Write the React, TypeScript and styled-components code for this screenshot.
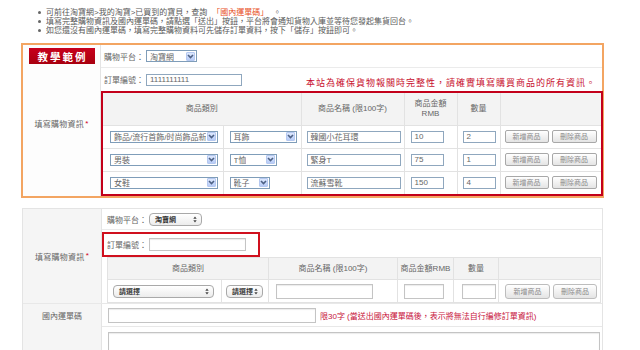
import styled, { createGlobalStyle } from "styled-components";

// ─── Global ────────────────────────────
const GlobalStyle = createGlobalStyle`
  html, body { margin: 0; padding: 0; background: #ffffff; }
  body {
    font-family: "Liberation Sans", "Noto Sans CJK TC", sans-serif;
    color: #555555;
  }
  * { box-sizing: border-box; }
`;

// ─── Layout ────────────────────────────
const Page = styled.div`
  width: 640px;
  height: 350px;
  overflow: hidden;
  padding: 8px 36px 0 21px;
`;

const Notes = styled.ul`
  list-style: none;
  margin: 0 0 8px;
  padding: 0 0 0 17px;
`;

const NoteItem = styled.li`
  display: flex;
  align-items: center;
  gap: 5px;
  height: 9px;
  font-size: 8px;
  line-height: 9px;
  color: #5a5a5a;
  white-space: nowrap;
`;

const Dot = styled.span`
  width: 3px;
  height: 3px;
  border-radius: 50%;
  background: #666666;
  flex-shrink: 0;
`;

const Hot = styled.span`
  color: #e8501e;
`;

const FormBlock = styled.div<{ $sample?: boolean }>`
  width: ${(p) => (p.$sample ? 583 : 581)}px;
  margin-left: ${(p) => (p.$sample ? 0 : 1)}px;
  margin-bottom: ${(p) => (p.$sample ? 10 : 0)}px;
  border: ${(p) => (p.$sample ? "2px solid #f3a562" : "1px solid #e4e4e4")};
  background: #ffffff;
`;

const FormRow = styled.div<{ $left: number; $h?: number; $last?: boolean }>`
  display: grid;
  grid-template-columns: ${(p) => p.$left}px 1fr;
  ${(p) => (p.$h ? `height: ${p.$h}px;` : "")}
  border-bottom: ${(p) => (p.$last ? "none" : "1px solid #e8e8e8")};
`;

const LabelCell = styled.div<{ $tone?: "plain" | "gray" }>`
  display: flex;
  flex-direction: column;
  align-items: center;
  justify-content: center;
  background: ${(p) => (p.$tone === "gray" ? "#f5f5f5" : "#fdfdfd")};
  border-right: 1px solid #e4e4e4;
  font-size: 8px;
  color: #666666;
  white-space: nowrap;
`;

const SampleLabelCell = styled(LabelCell)`
  justify-content: flex-start;
  padding: 3px 2px;
`;

const Badge = styled.div`
  width: 66px;
  height: 16px;
  display: flex;
  align-items: center;
  justify-content: center;
  background: linear-gradient(180deg, #c8001c 0%, #a8000f 100%);
  color: #ffffff;
  font-family: "Noto Sans CJK TC", sans-serif;
  font-weight: 700;
  font-size: 10.5px;
  letter-spacing: 2px;
  padding-left: 2px;
`;

const LabelText = styled.div<{ $shift?: number }>`
  flex: 1;
  display: flex;
  align-items: center;
  padding-bottom: ${(p) => p.$shift ?? 0}px;
  letter-spacing: 0.3px;
`;

const Star = styled.sup`
  color: #d0021b;
  font-size: 8px;
  line-height: 0;
  margin-left: 1px;
`;

const FieldCell = styled.div`
  display: flex;
  flex-direction: column;
  min-width: 0;
`;

const FieldRow = styled.div<{ $h: number; $pad: number; $line?: boolean }>`
  height: ${(p) => p.$h}px;
  display: flex;
  align-items: center;
  gap: 2px;
  padding-left: ${(p) => p.$pad}px;
  border-bottom: ${(p) => (p.$line ? "1px solid #ebebeb" : "none")};
  font-size: 8px;
  color: #666666;
  white-space: nowrap;
`;

const Notice = styled.span`
  margin-left: auto;
  margin-right: 6px;
  align-self: flex-end;
  padding-bottom: 2px;
  color: #c8102e;
  font-size: 9px;
  letter-spacing: 1px;
`;

const Highlight = styled.div`
  display: flex;
  align-items: center;
  gap: 2px;
  width: 158px;
  height: 25px;
  margin-top: 1px;
  padding-left: 3px;
  border: 2px solid #d0101e;
`;

// ─── Form controls ─────────────────────
const XpSelect = styled.div<{ $w: number }>`
  width: ${(p) => p.$w}px;
  height: 12px;
  display: flex;
  align-items: center;
  justify-content: space-between;
  padding: 0 1px 0 3px;
  border: 1px solid #7f9db9;
  background: #ffffff;
  font-size: 8px;
  color: #666666;
  overflow: hidden;
`;

const XpSelectText = styled.span`
  overflow: hidden;
  white-space: nowrap;
`;

const XpArrow = styled.span`
  width: 9px;
  height: 9px;
  flex-shrink: 0;
  display: flex;
  align-items: center;
  justify-content: center;
  background: linear-gradient(180deg, #dde8fd 0%, #b7cbf6 100%);
  border: 1px solid #b5c8f0;
  border-radius: 1px;
`;

const MacSelect = styled.div<{ $w: number }>`
  width: ${(p) => p.$w}px;
  height: 13px;
  display: flex;
  align-items: center;
  justify-content: space-between;
  padding: 0 4px 0 5px;
  border: 1px solid #a9a9a9;
  border-radius: 4px;
  background: linear-gradient(180deg, #ffffff 0%, #ececec 100%);
  font-size: 7px;
  font-weight: 700;
  color: #333333;
`;

const TextBox = styled.div<{ $w: number; $h?: number; $mac?: boolean }>`
  width: ${(p) => p.$w}px;
  height: ${(p) => p.$h ?? 12}px;
  display: flex;
  align-items: center;
  padding-left: 3px;
  border: 1px solid ${(p) => (p.$mac ? "#c4c4c4" : "#8fa7be")};
  box-shadow: ${(p) => (p.$mac ? "inset 0 1px 1px rgba(0,0,0,0.08)" : "none")};
  background: #ffffff;
  font-size: 8px;
  color: #666666;
  white-space: nowrap;
`;

const Btn = styled.button<{ $w: number; $mac?: boolean }>`
  width: ${(p) => p.$w}px;
  height: ${(p) => (p.$mac ? 15 : 13)}px;
  padding: 0;
  border: 1px solid ${(p) => (p.$mac ? "#bdbdbd" : "#a8a8a8")};
  border-radius: ${(p) => (p.$mac ? 3 : 2)}px;
  background: linear-gradient(180deg, #ffffff 0%, #e4e4e4 100%);
  font-family: "Noto Sans CJK TC", sans-serif;
  font-size: 7px;
  color: #8a8a8a;
  line-height: 1;
`;

const BtnGroup = styled.div`
  display: flex;
  gap: 3px;
`;

const TextArea = styled.div`
  width: 492px;
  height: 40px;
  margin: 5px 0 0 6px;
  border: 1px solid #c4c4c4;
  box-shadow: inset 0 1px 1px rgba(0,0,0,0.08);
  background: #ffffff;
`;

const Hint = styled.span`
  color: #c8143c;
  font-size: 8px;
  margin-left: 2px;
`;

// ─── Tables ────────────────────────────
const ItemTable = styled.table<{ $sample?: boolean }>`
  border-collapse: collapse;
  table-layout: fixed;
  width: ${(p) => (p.$sample ? 500 : 493)}px;
  margin-left: ${(p) => (p.$sample ? 0 : 5)}px;
  border: ${(p) => (p.$sample ? "2px solid #c3001a" : "1px solid #e2e2e2")};

  th, td {
    border: 1px solid #e2e2e2;
    padding: 0;
    font-size: 8px;
    color: #666666;
    font-weight: 400;
  }
  th {
    background: #f3f3f3;
    text-align: center;
    line-height: 10px;
  }
`;

const HeadRow = styled.tr<{ $h: number }>`
  height: ${(p) => p.$h}px;
`;

const BodyRow = styled.tr<{ $h: number }>`
  height: ${(p) => p.$h}px;
`;

const Cell = styled.td<{ $pad: number }>`
  && { padding-left: ${(p) => p.$pad}px; }
  vertical-align: middle;
`;

// ─── Icons ─────────────────────────────
const ChevronDown = () => (
  <svg width="7" height="5" viewBox="0 0 7 5">
    <path d="M1 1 L3.5 3.5 L6 1" stroke="#4d6185" strokeWidth="1.6" fill="none" />
  </svg>
);

const UpDown = () => (
  <svg width="4" height="7" viewBox="0 0 4 7">
    <path d="M0.3 2.8 L2 0.6 L3.7 2.8 Z M0.3 4.2 L2 6.4 L3.7 4.2 Z" fill="#444444" />
  </svg>
);

// ─── Data ──────────────────────────────
type Item = {
  cat: string;
  sub: string;
  subW: number;
  name: string;
  price: string;
  qty: string;
};

const sampleItems: Item[] = [
  { cat: "飾品/流行首飾/时尚飾品新", sub: "耳飾", subW: 67, name: "韓國小花耳環", price: "10", qty: "2" },
  { cat: "男裝", sub: "T恤", subW: 47, name: "緊身T", price: "75", qty: "1" },
  { cat: "女鞋", sub: "靴子", subW: 40, name: "流蘇雪靴", price: "150", qty: "4" },
];

const XpPick = ({ w, value }: { w: number; value: string }) => (
  <XpSelect $w={w}>
    <XpSelectText>{value}</XpSelectText>
    <XpArrow><ChevronDown /></XpArrow>
  </XpSelect>
);

const MacPick = ({ w, value }: { w: number; value: string }) => (
  <MacSelect $w={w}>
    <span>{value}</span>
    <UpDown />
  </MacSelect>
);

// ─── Component ─────────────────────────
export default function App() {
  return (
    <>
      <GlobalStyle />
      <Page>
        <Notes>
          <NoteItem><Dot />可前往淘寶網&gt;我的淘寶&gt;已買到的寶貝，查詢<Hot>「國內運單碼」</Hot>。</NoteItem>
          <NoteItem><Dot />填寫完整購物資訊及國內運單碼，請點選「送出」按鈕，平台將會通知貨物入庫並等待您發起集貨回台。</NoteItem>
          <NoteItem><Dot />如您還沒有國內運單碼，填寫完整購物資料可先儲存訂單資料，按下「儲存」按鈕即可。</NoteItem>
        </Notes>

        {/* ── Sample (教學範例) ── */}
        <FormBlock $sample>
          <FormRow $left={78} $last>
            <SampleLabelCell>
              <Badge>教學範例</Badge>
              <LabelText $shift={10}>填寫購物資訊<Star>*</Star></LabelText>
            </SampleLabelCell>
            <FieldCell>
              <FieldRow $h={23} $pad={3} $line>
                購物平台：<XpPick w={51} value="淘寶網" />
              </FieldRow>
              <FieldRow $h={23} $pad={3}>
                訂單編號：<TextBox $w={96}>1111111111</TextBox>
                <Notice>本站為確保貨物報關時完整性，請確實填寫購買商品的所有資訊。</Notice>
              </FieldRow>
              <ItemTable $sample>
                <colgroup>
                  <col style={{ width: 121 }} />
                  <col style={{ width: 78 }} />
                  <col style={{ width: 103 }} />
                  <col style={{ width: 53 }} />
                  <col style={{ width: 43 }} />
                  <col style={{ width: 102 }} />
                </colgroup>
                <thead>
                  <HeadRow $h={33}>
                    <th colSpan={2}>商品類別</th>
                    <th>商品名稱 (限100字)</th>
                    <th>商品金額<br />RMB</th>
                    <th>數量</th>
                    <th />
                  </HeadRow>
                </thead>
                <tbody>
                  {sampleItems.map((it, i) => (
                    <BodyRow key={i} $h={i === 2 ? 24 : 23}>
                      <Cell $pad={7}><XpPick w={108} value={it.cat} /></Cell>
                      <Cell $pad={6}><XpPick w={it.subW} value={it.sub} /></Cell>
                      <Cell $pad={5}><TextBox $w={94}>{it.name}</TextBox></Cell>
                      <Cell $pad={6}><TextBox $w={33}>{it.price}</TextBox></Cell>
                      <Cell $pad={5}><TextBox $w={33}>{it.qty}</TextBox></Cell>
                      <Cell $pad={4}>
                        <BtnGroup>
                          <Btn $w={44}>新增商品</Btn>
                          <Btn $w={45}>刪除商品</Btn>
                        </BtnGroup>
                      </Cell>
                    </BodyRow>
                  ))}
                </tbody>
              </ItemTable>
            </FieldCell>
          </FormRow>
        </FormBlock>

        {/* ── Actual form ── */}
        <FormBlock>
          <FormRow $left={79}>
            <LabelCell $tone="gray">
              <LabelText>填寫購物資訊<Star>*</Star></LabelText>
            </LabelCell>
            <FieldCell>
              <FieldRow $h={21} $pad={5} $line>
                購物平台：<MacPick w={53} value="淘寶網" />
              </FieldRow>
              <FieldRow $h={27} $pad={0}>
                <Highlight>
                  訂單編號：<TextBox $w={97} $h={13} $mac />
                </Highlight>
              </FieldRow>
              <ItemTable>
                <colgroup>
                  <col style={{ width: 114 }} />
                  <col style={{ width: 47 }} />
                  <col style={{ width: 129 }} />
                  <col style={{ width: 56 }} />
                  <col style={{ width: 45 }} />
                  <col style={{ width: 102 }} />
                </colgroup>
                <thead>
                  <HeadRow $h={22}>
                    <th colSpan={2}>商品類別</th>
                    <th>商品名稱 (限100字)</th>
                    <th>商品金額RMB</th>
                    <th>數量</th>
                    <th />
                  </HeadRow>
                </thead>
                <tbody>
                  <BodyRow $h={23}>
                    <Cell $pad={5}><MacPick w={101} value="請選擇" /></Cell>
                    <Cell $pad={4}><MacPick w={37} value="請選擇" /></Cell>
                    <Cell $pad={7}><TextBox $w={97} $h={15} $mac /></Cell>
                    <Cell $pad={6}><TextBox $w={40} $h={15} $mac /></Cell>
                    <Cell $pad={8}><TextBox $w={34} $h={15} $mac /></Cell>
                    <Cell $pad={6}>
                      <BtnGroup>
                        <Btn $w={45} $mac>新增商品</Btn>
                        <Btn $w={44} $mac>刪除商品</Btn>
                      </BtnGroup>
                    </Cell>
                  </BodyRow>
                </tbody>
              </ItemTable>
            </FieldCell>
          </FormRow>

          <FormRow $left={79} $h={23}>
            <LabelCell $tone="gray">國內運單碼</LabelCell>
            <FieldRow $h={23} $pad={6}>
              <TextBox $w={208} $h={15} $mac />
              <Hint>限30字 (當送出國內運單碼後，表示將無法自行編修訂單資訊)</Hint>
            </FieldRow>
          </FormRow>

          <FormRow $left={79} $h={60} $last>
            <LabelCell $tone="gray" />
            <FieldCell>
              <TextArea />
            </FieldCell>
          </FormRow>
        </FormBlock>
      </Page>
    </>
  );
}
